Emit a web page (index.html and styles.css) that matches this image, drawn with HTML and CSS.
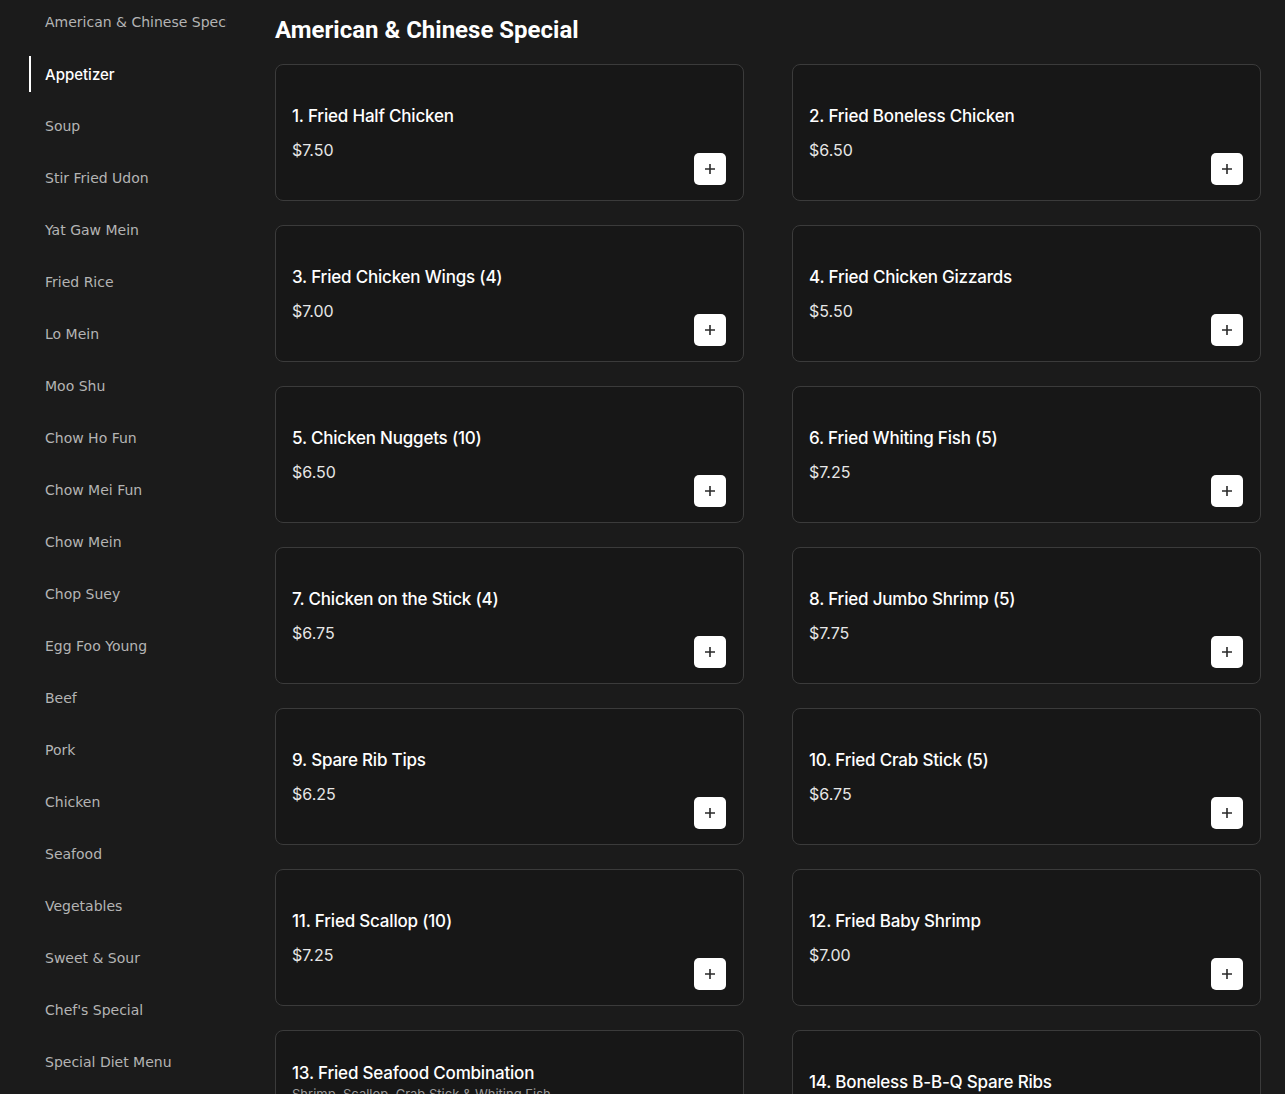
FILE: index.html
```html
<!DOCTYPE html>
<html>
<head>
<meta charset="utf-8">
<link rel="stylesheet" href="styles.css">
</head>
<body>
<div class="page">
  <nav class="sidebar">
    <a class="cat">American &amp; Chinese Special</a>
    <a class="cat active">Appetizer</a>
    <a class="cat">Soup</a>
    <a class="cat">Stir Fried Udon</a>
    <a class="cat">Yat Gaw Mein</a>
    <a class="cat">Fried Rice</a>
    <a class="cat">Lo Mein</a>
    <a class="cat">Moo Shu</a>
    <a class="cat">Chow Ho Fun</a>
    <a class="cat">Chow Mei Fun</a>
    <a class="cat">Chow Mein</a>
    <a class="cat">Chop Suey</a>
    <a class="cat">Egg Foo Young</a>
    <a class="cat">Beef</a>
    <a class="cat">Pork</a>
    <a class="cat">Chicken</a>
    <a class="cat">Seafood</a>
    <a class="cat">Vegetables</a>
    <a class="cat">Sweet &amp; Sour</a>
    <a class="cat">Chef's Special</a>
    <a class="cat">Special Diet Menu</a>
  </nav>
  <main class="main">
    <h1 class="heading">American &amp; Chinese Special</h1>
    <div class="grid">
      <div class="card"><div class="info"><div class="name">1. Fried Half Chicken</div><div class="price">$7.50</div></div><button class="add"><svg viewBox="0 0 12 12" width="12" height="12"><path d="M6 1v10M1 6h10" stroke="#2a2a2a" stroke-width="1.6"/></svg></button></div>
      <div class="card"><div class="info"><div class="name">2. Fried Boneless Chicken</div><div class="price">$6.50</div></div><button class="add"><svg viewBox="0 0 12 12" width="12" height="12"><path d="M6 1v10M1 6h10" stroke="#2a2a2a" stroke-width="1.6"/></svg></button></div>
      <div class="card"><div class="info"><div class="name">3. Fried Chicken Wings (4)</div><div class="price">$7.00</div></div><button class="add"><svg viewBox="0 0 12 12" width="12" height="12"><path d="M6 1v10M1 6h10" stroke="#2a2a2a" stroke-width="1.6"/></svg></button></div>
      <div class="card"><div class="info"><div class="name">4. Fried Chicken Gizzards</div><div class="price">$5.50</div></div><button class="add"><svg viewBox="0 0 12 12" width="12" height="12"><path d="M6 1v10M1 6h10" stroke="#2a2a2a" stroke-width="1.6"/></svg></button></div>
      <div class="card"><div class="info"><div class="name">5. Chicken Nuggets (10)</div><div class="price">$6.50</div></div><button class="add"><svg viewBox="0 0 12 12" width="12" height="12"><path d="M6 1v10M1 6h10" stroke="#2a2a2a" stroke-width="1.6"/></svg></button></div>
      <div class="card"><div class="info"><div class="name">6. Fried Whiting Fish (5)</div><div class="price">$7.25</div></div><button class="add"><svg viewBox="0 0 12 12" width="12" height="12"><path d="M6 1v10M1 6h10" stroke="#2a2a2a" stroke-width="1.6"/></svg></button></div>
      <div class="card"><div class="info"><div class="name">7. Chicken on the Stick (4)</div><div class="price">$6.75</div></div><button class="add"><svg viewBox="0 0 12 12" width="12" height="12"><path d="M6 1v10M1 6h10" stroke="#2a2a2a" stroke-width="1.6"/></svg></button></div>
      <div class="card"><div class="info"><div class="name">8. Fried Jumbo Shrimp (5)</div><div class="price">$7.75</div></div><button class="add"><svg viewBox="0 0 12 12" width="12" height="12"><path d="M6 1v10M1 6h10" stroke="#2a2a2a" stroke-width="1.6"/></svg></button></div>
      <div class="card"><div class="info"><div class="name">9. Spare Rib Tips</div><div class="price">$6.25</div></div><button class="add"><svg viewBox="0 0 12 12" width="12" height="12"><path d="M6 1v10M1 6h10" stroke="#2a2a2a" stroke-width="1.6"/></svg></button></div>
      <div class="card"><div class="info"><div class="name">10. Fried Crab Stick (5)</div><div class="price">$6.75</div></div><button class="add"><svg viewBox="0 0 12 12" width="12" height="12"><path d="M6 1v10M1 6h10" stroke="#2a2a2a" stroke-width="1.6"/></svg></button></div>
      <div class="card"><div class="info"><div class="name">11. Fried Scallop (10)</div><div class="price">$7.25</div></div><button class="add"><svg viewBox="0 0 12 12" width="12" height="12"><path d="M6 1v10M1 6h10" stroke="#2a2a2a" stroke-width="1.6"/></svg></button></div>
      <div class="card"><div class="info"><div class="name">12. Fried Baby Shrimp</div><div class="price">$7.00</div></div><button class="add"><svg viewBox="0 0 12 12" width="12" height="12"><path d="M6 1v10M1 6h10" stroke="#2a2a2a" stroke-width="1.6"/></svg></button></div>
      <div class="card"><div class="info"><div class="name">13. Fried Seafood Combination</div><div class="desc">Shrimp, Scallop, Crab Stick &amp; Whiting Fish</div><div class="price">$9.50</div></div><button class="add"><svg viewBox="0 0 12 12" width="12" height="12"><path d="M6 1v10M1 6h10" stroke="#2a2a2a" stroke-width="1.6"/></svg></button></div>
      <div class="card"><div class="info"><div class="name">14. Boneless B-B-Q Spare Ribs</div><div class="price">$8.25</div></div><button class="add"><svg viewBox="0 0 12 12" width="12" height="12"><path d="M6 1v10M1 6h10" stroke="#2a2a2a" stroke-width="1.6"/></svg></button></div>
    </div>
  </main>
</div>
</body>
</html>
```
FILE: styles.css
```css
html, body {
  margin: 0;
  padding: 0;
  background: #1b1b1b;
  height: 100%;
  overflow: hidden;
}
.page {
  display: flex;
  align-items: flex-start;
}
.sidebar {
  width: 227px;
  flex-shrink: 0;
  padding: 4px 0 0 29px;
  box-sizing: border-box;
  display: flex;
  flex-direction: column;
  gap: 16px;
  overflow: hidden;
}
.cat {
  display: flex;
  align-items: center;
  height: 36px;
  padding-left: 14px;
  border-left: 2px solid transparent;
  font-family: "DejaVu Sans", sans-serif;
  font-size: 14px;
  color: #b4b4b4;
  white-space: nowrap;
  overflow: hidden;
}
.cat.active {
  border-left-color: #ffffff;
  color: #ffffff;
  font-family: Inter, "Noto Sans", sans-serif;
  font-weight: 500;
  font-size: 15px;
}
.main {
  flex: 1;
  padding: 12px 24px 0 48px;
}
.heading {
  margin: 0 0 16px;
  font-family: Roboto, sans-serif;
  font-weight: 700;
  font-size: 24px;
  line-height: 36px;
  color: #ffffff;
}
.grid {
  display: grid;
  grid-template-columns: 1fr 1fr;
  column-gap: 48px;
  row-gap: 24px;
}
.card {
  box-sizing: border-box;
  min-height: 137px;
  border: 1px solid #3b3b3b;
  border-radius: 8px;
  background: #171717;
  padding: 15px 17px 15px 16px;
  display: flex;
  align-items: center;
}
.info {
  flex: 1;
  display: flex;
  flex-direction: column;
  font-family: Inter, "Noto Sans", sans-serif;
}
.name {
  font-size: 17px;
  font-weight: 500;
  line-height: 24px;
  color: #ffffff;
  letter-spacing: -0.2px;
}
.desc {
  font-size: 13px;
  line-height: 18px;
  color: #9a9a9a;
}
.price {
  margin-top: 10px;
  font-size: 16px;
  line-height: 24px;
  color: #e6e6e6;
}
.add {
  align-self: flex-end;
  width: 32px;
  height: 32px;
  border: none;
  border-radius: 5px;
  background: #ffffff;
  display: flex;
  align-items: center;
  justify-content: center;
  padding: 0;
}
```
